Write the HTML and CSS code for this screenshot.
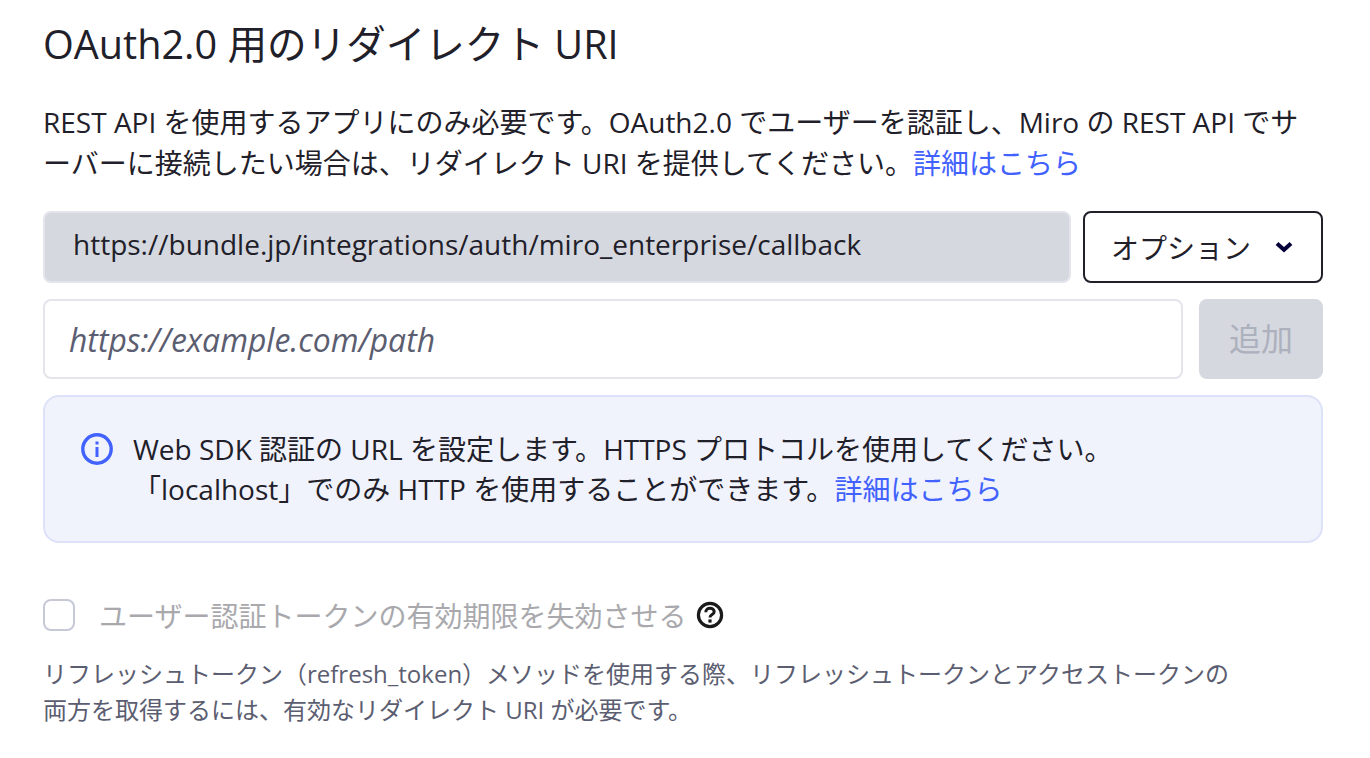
FILE: index.html
```html
<!DOCTYPE html>
<html lang="ja">
<head>
  <meta charset="UTF-8" />
  <title>OAuth2.0 用のリダイレクト URI</title>
  <link rel="stylesheet" href="styles.css">
</head>
<body>

  <h1>OAuth2.0 用のリダイレクト URI</h1>

  <p class="lead">REST API を使用するアプリにのみ必要です。OAuth2.0 でユーザーを認証し、Miro の REST API でサーバーに接続したい場合は、リダイレクト URI を提供してください。<a href="#">詳細はこちら</a></p>

  <div class="row row-saved">
    <div class="saved-uri">https://bundle.jp/integrations/auth/miro_enterprise/callback</div>
    <button class="btn-options">オプション
      <svg class="chevron" width="18" height="12" viewBox="0 0 18 12"><path d="M2 2.4l7 6.4 7-6.4" fill="none" stroke="#050038" stroke-width="4"/></svg>
    </button>
  </div>

  <div class="row row-add">
    <input class="uri-input" type="text" placeholder="https://example.com/path">
    <button class="btn-add">追加</button>
  </div>

  <div class="notice">
    <svg class="info-icon" width="32" height="32" viewBox="0 0 32 32">
      <circle cx="16" cy="16" r="14.2" fill="none" stroke="#4262ff" stroke-width="3.4"/>
      <rect x="14.5" y="14" width="3" height="10" fill="#4262ff"/>
      <rect x="14.5" y="8.5" width="3" height="3" fill="#4262ff"/>
    </svg>
    <p>Web SDK 認証の URL を設定します。HTTPS プロトコルを使用してください。<br>「localhost」でのみ HTTP を使用することができます。<a href="#">詳細はこちら</a></p>
  </div>

  <div class="check-row">
    <span class="checkbox"></span>
    <span class="check-label">ユーザー認証トークンの有効期限を失効させる</span>
    <svg class="help-icon" width="28" height="28" viewBox="0 0 28 28">
      <circle cx="14" cy="14" r="11.6" fill="none" stroke="#1a1a1a" stroke-width="3.2"/>
      <path d="M9.8 11.2c0-2.5 1.9-3.9 4.2-3.9s4.2 1.4 4.2 3.5c0 2.8-4.2 2.8-4.2 5.6" fill="none" stroke="#1a1a1a" stroke-width="3"/>
      <rect x="12.4" y="18.4" width="3.2" height="3.2" fill="#1a1a1a"/>
    </svg>
  </div>

  <p class="hint">リフレッシュトークン（refresh_token）メソッドを使用する際、リフレッシュトークンとアクセストークンの<br>両方を取得するには、有効なリダイレクト URI が必要です。</p>

</body>
</html>
```

FILE: styles.css
```css
body {
  margin: 0;
  padding: 20px 47px 0 43px;
  background-color: #ffffff;
  color: #1f2029;
  font-family: 'Open Sans', 'Noto Sans CJK JP', sans-serif;
}
h1 {
  margin: 0;
  font-size: 39.6px;
  font-weight: 400;
  line-height: 48px;
}
a {
  color: #4262ff;
  text-decoration: none;
}
.lead {
  margin: 34px 0 27px;
  font-size: 28px;
  line-height: 41px;
}
.row {
  display: flex;
}
.row-saved {
  gap: 12px;
  height: 72px;
}
.row-add {
  gap: 16px;
  height: 80px;
  margin-top: 16px;
}
.saved-uri {
  flex: 1;
  display: flex;
  align-items: center;
  padding: 0 0 6px 28px;
  background-color: #d5d8df;
  border: 2px solid #e4e5ec;
  border-radius: 8px;
  font-size: 28px;
}
.btn-options {
  display: flex;
  align-items: center;
  justify-content: center;
  gap: 24px;
  width: 240px;
  padding: 0 2px 0 0;
  background-color: #ffffff;
  border: 2px solid #1f2029;
  border-radius: 8px;
  color: #1f2029;
  font-family: inherit;
  font-size: 28px;
}
.uri-input {
  flex: 1;
  min-width: 0;
  padding: 0 24px;
  background-color: #ffffff;
  border: 2px solid #e4e5ec;
  border-radius: 8px;
  font-family: inherit;
  font-size: 31.9px;
}
.uri-input::placeholder {
  color: #5b5d70;
  font-style: italic;
  opacity: 1;
}
.btn-add {
  width: 124px;
  padding: 0 0 4px;
  background-color: #d5d8df;
  border: 0;
  border-radius: 8px;
  color: #adb0bd;
  font-family: inherit;
  font-size: 32px;
}
.notice {
  display: flex;
  gap: 20px;
  height: 148px;
  margin-top: 16px;
  padding: 32px 36px;
  box-sizing: border-box;
  background-color: #f0f3fc;
  border: 2px solid #dde2f8;
  border-radius: 16px;
}
.notice p {
  margin: 0;
  font-size: 28px;
  line-height: 40px;
}
.info-icon {
  flex: none;
  margin-top: 4px;
}
.check-row {
  display: flex;
  align-items: center;
  margin-top: 56px;
  height: 32px;
}
.checkbox {
  width: 32px;
  height: 32px;
  box-sizing: border-box;
  border: 2px solid #c7cad6;
  border-radius: 8px;
}
.check-label {
  margin-left: 24px;
  color: #a9a9ad;
  font-size: 28px;
}
.help-icon {
  margin-left: 10px;
}
.hint {
  margin: 25px 0 0;
  color: #5b5d70;
  font-size: 24px;
  line-height: 36px;
}
```
